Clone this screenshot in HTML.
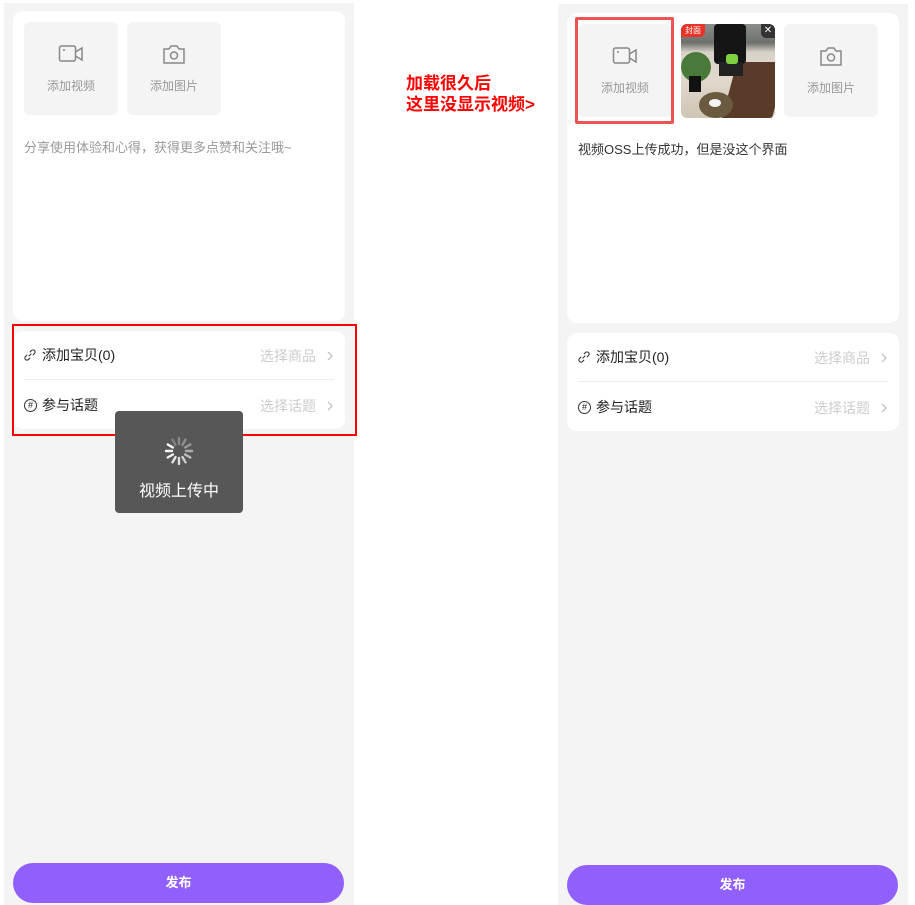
<!DOCTYPE html>
<html><head><meta charset="utf-8">
<style>
*{margin:0;padding:0;box-sizing:border-box}
body{width:915px;height:905px;background:#fff;position:relative;overflow:hidden;font-family:"Liberation Sans","Noto Sans CJK SC",sans-serif}
.abs{position:absolute}
.panel{background:#f4f4f4}
.card{background:#fff;border-radius:10px}
.tile{background:#f4f4f4;border-radius:6px;text-align:center;color:#999;font-size:12px}
.tile svg{display:block;margin:0 auto}
.row{font-size:14px;color:#222;display:flex;align-items:center}
.right{color:#ccc;font-size:14px;display:flex;align-items:center}
.btn{background:#9160fc;border-radius:20px;color:#fff;font-size:13px;text-align:center;line-height:40px;font-weight:bold}
</style></head><body>

<!-- LEFT -->
<div class="abs panel" style="left:4px;top:3px;width:350px;height:902px"></div>
<div class="abs card" style="left:13px;top:11px;width:332px;height:310px"></div>
<div class="abs tile" style="left:24px;top:22px;width:94px;height:93px;padding-top:21px">
<svg width="26" height="22" viewBox="0 0 26 22"><rect x="1.5" y="3" width="16" height="15" rx="2" fill="none" stroke="#888" stroke-width="1.5"/><path d="M17.5 9 L24 5 V17 L17.5 13" fill="none" stroke="#888" stroke-width="1.5"/><path d="M5 7h2" stroke="#888" stroke-width="1.5"/></svg>
<div style="margin-top:12px">添加视频</div></div>
<div class="abs tile" style="left:127px;top:22px;width:94px;height:93px;padding-top:21px">
<svg width="26" height="22" viewBox="0 0 26 22"><path d="M3 6h5l2-3h6l2 3h5v14H3z" fill="none" stroke="#888" stroke-width="1.5"/><circle cx="13" cy="12.5" r="3.5" fill="none" stroke="#888" stroke-width="1.5"/></svg>
<div style="margin-top:12px">添加图片</div></div>
<div class="abs" style="left:24px;top:137px;font-size:13px;color:#999">分享使用体验和心得，获得更多点赞和关注哦~</div>

<div class="abs card" style="left:13px;top:331px;width:332px;height:98px"></div>
<div class="abs row" style="left:24px;top:345px;height:20px"><svg width="12" height="12" viewBox="0 0 12 12" style="margin-right:6px"><path d="M5 7 L7 5 M6.2 2.8 L7.5 1.5 a2 2 0 0 1 3 3 L9.2 5.8 M5.8 9.2 L4.5 10.5 a2 2 0 0 1 -3 -3 L2.8 6.2" fill="none" stroke="#333" stroke-width="1.1" stroke-linecap="round"/></svg>添加宝贝(0)</div>
<div class="abs right" style="left:260px;top:346px;height:20px">选择商品<svg width="8" height="10" viewBox="0 0 8 10" style="margin-left:10px"><path d="M2 1l4 4-4 4" fill="none" stroke="#bbb" stroke-width="1.2"/></svg></div>
<div class="abs" style="left:24px;top:379px;width:310px;height:1px;background:#eee"></div>
<div class="abs row" style="left:24px;top:395px;height:20px"><span style="display:inline-block;width:13px;height:13px;border:1px solid #333;border-radius:50%;font-size:9px;line-height:11px;text-align:center;margin-right:5px">#</span>参与话题</div>
<div class="abs right" style="left:260px;top:396px;height:20px">选择话题<svg width="8" height="10" viewBox="0 0 8 10" style="margin-left:10px"><path d="M2 1l4 4-4 4" fill="none" stroke="#bbb" stroke-width="1.2"/></svg></div>
<div class="abs" style="left:12px;top:324px;width:345px;height:112px;border:2px solid #f00"></div>

<div class="abs" style="left:115px;top:411px;width:128px;height:102px;background:#575757;border-radius:4px;text-align:center;color:#fff;font-size:16px">
<svg width="32" height="32" viewBox="0 0 32 32" style="display:block;margin:24px auto 0">
<g stroke-width="2.4" stroke-linecap="round">
<line x1="16" y1="3" x2="16" y2="9" stroke="#fff" opacity=".3"/>
<line x1="22.5" y1="4.7" x2="19.5" y2="9.9" stroke="#fff" opacity=".35"/>
<line x1="27.3" y1="9.5" x2="22.1" y2="12.5" stroke="#fff" opacity=".4"/>
<line x1="29" y1="16" x2="23" y2="16" stroke="#fff" opacity=".5"/>
<line x1="27.3" y1="22.5" x2="22.1" y2="19.5" stroke="#fff" opacity=".6"/>
<line x1="22.5" y1="27.3" x2="19.5" y2="22.1" stroke="#fff" opacity=".7"/>
<line x1="16" y1="29" x2="16" y2="23" stroke="#fff" opacity=".8"/>
<line x1="9.5" y1="27.3" x2="12.5" y2="22.1" stroke="#fff" opacity=".85"/>
<line x1="4.7" y1="22.5" x2="9.9" y2="19.5" stroke="#fff" opacity=".9"/>
<line x1="3" y1="16" x2="9" y2="16" stroke="#fff" opacity=".95"/>
<line x1="4.7" y1="9.5" x2="9.9" y2="12.5" stroke="#fff"/>
<line x1="9.5" y1="4.7" x2="12.5" y2="9.9" stroke="#fff" opacity=".25"/>
</g></svg>
<div style="margin-top:10px">视频上传中</div></div>

<div class="abs btn" style="left:13px;top:863px;width:331px;height:40px">发布</div>

<!-- annotation -->
<div class="abs" style="left:406px;top:73px;color:#f00;font-weight:bold;font-size:17px;line-height:21px">加载很久后<br>这里没显示视频&gt;</div>

<!-- RIGHT -->
<div class="abs panel" style="left:558px;top:4px;width:350px;height:901px"></div>
<div class="abs card" style="left:567px;top:13px;width:332px;height:310px"></div>
<div class="abs tile" style="left:578px;top:24px;width:94px;height:93px;padding-top:21px">
<svg width="26" height="22" viewBox="0 0 26 22"><rect x="1.5" y="3" width="16" height="15" rx="2" fill="none" stroke="#888" stroke-width="1.5"/><path d="M17.5 9 L24 5 V17 L17.5 13" fill="none" stroke="#888" stroke-width="1.5"/><path d="M5 7h2" stroke="#888" stroke-width="1.5"/></svg>
<div style="margin-top:12px">添加视频</div></div>
<div class="abs" style="left:575px;top:17px;width:99px;height:107px;border:3px solid #f05252;border-radius:2px"></div>
<div class="abs" style="left:681px;top:24px;width:94px;height:94px;border-radius:6px;overflow:hidden;background:linear-gradient(180deg,#8a8e8a 0%,#6e706c 20%,#d8d2c8 30%,#e0d8cc 60%,#cfc5b5 100%)">
<div class="abs" style="left:48px;top:38px;width:50px;height:60px;background:#5a3a28;transform:skewX(-15deg)"></div>
<div class="abs" style="left:0;top:28px;width:30px;height:30px;background:#4a7a3a;border-radius:50%"></div>
<div class="abs" style="left:8px;top:52px;width:12px;height:16px;background:#111"></div>
<div class="abs" style="left:33px;top:0;width:32px;height:40px;background:#151515;border-radius:4px"></div>
<div class="abs" style="left:38px;top:38px;width:24px;height:14px;background:#222"></div>
<div class="abs" style="left:45px;top:30px;width:12px;height:10px;background:#7fd040;border-radius:3px"></div>
<div class="abs" style="left:18px;top:68px;width:34px;height:26px;background:#6a5a40;border-radius:50%"></div>
<div class="abs" style="left:28px;top:75px;width:12px;height:8px;background:#f4f4f4;border-radius:50%"></div>
<div class="abs" style="left:0;top:0;background:#e8342a;color:#fff;font-size:8px;padding:1px 4px;border-radius:0 0 5px 0">封面</div>
<div class="abs" style="right:0;top:0;width:14px;height:14px;background:#333;color:#fff;font-size:10px;line-height:14px;text-align:center;border-radius:0 0 0 5px">✕</div>
</div>
<div class="abs tile" style="left:784px;top:24px;width:94px;height:93px;padding-top:21px">
<svg width="26" height="22" viewBox="0 0 26 22"><path d="M3 6h5l2-3h6l2 3h5v14H3z" fill="none" stroke="#888" stroke-width="1.5"/><circle cx="13" cy="12.5" r="3.5" fill="none" stroke="#888" stroke-width="1.5"/></svg>
<div style="margin-top:12px">添加图片</div></div>
<div class="abs" style="left:578px;top:139px;font-size:13px;color:#333">视频OSS上传成功，但是没这个界面</div>

<div class="abs card" style="left:567px;top:333px;width:332px;height:98px"></div>
<div class="abs row" style="left:578px;top:347px;height:20px"><svg width="12" height="12" viewBox="0 0 12 12" style="margin-right:6px"><path d="M5 7 L7 5 M6.2 2.8 L7.5 1.5 a2 2 0 0 1 3 3 L9.2 5.8 M5.8 9.2 L4.5 10.5 a2 2 0 0 1 -3 -3 L2.8 6.2" fill="none" stroke="#333" stroke-width="1.1" stroke-linecap="round"/></svg>添加宝贝(0)</div>
<div class="abs right" style="left:814px;top:348px;height:20px">选择商品<svg width="8" height="10" viewBox="0 0 8 10" style="margin-left:10px"><path d="M2 1l4 4-4 4" fill="none" stroke="#bbb" stroke-width="1.2"/></svg></div>
<div class="abs" style="left:578px;top:381px;width:310px;height:1px;background:#eee"></div>
<div class="abs row" style="left:578px;top:397px;height:20px"><span style="display:inline-block;width:13px;height:13px;border:1px solid #333;border-radius:50%;font-size:9px;line-height:11px;text-align:center;margin-right:5px">#</span>参与话题</div>
<div class="abs right" style="left:814px;top:398px;height:20px">选择话题<svg width="8" height="10" viewBox="0 0 8 10" style="margin-left:10px"><path d="M2 1l4 4-4 4" fill="none" stroke="#bbb" stroke-width="1.2"/></svg></div>

<div class="abs btn" style="left:567px;top:865px;width:331px;height:40px">发布</div>
</body></html>
